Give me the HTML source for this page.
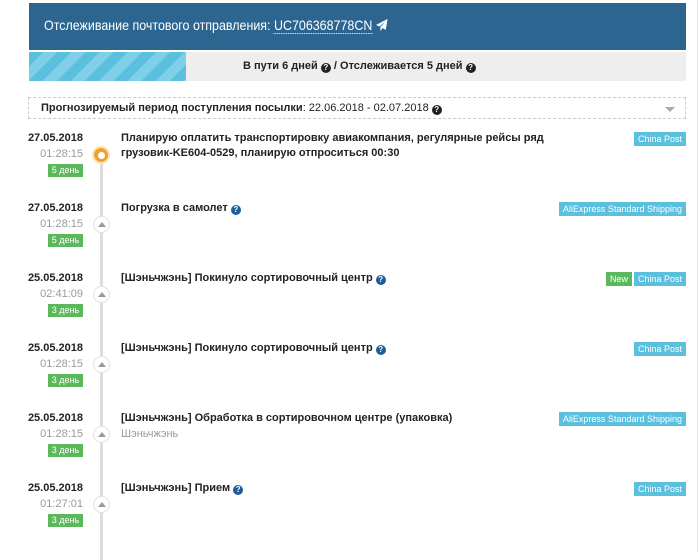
<!DOCTYPE html>
<html><head><meta charset="utf-8"><style>
*{margin:0;padding:0;box-sizing:border-box}
body{width:700px;height:551px;background:#fff;font-family:"Liberation Sans",sans-serif;position:relative;overflow:hidden;color:#222}
.abs{position:absolute}
.hdr{left:29px;top:3px;width:657px;height:47px;background:#2c6690;color:#fff;font-size:14px;padding:14px 0 0 15px}
.hdr .t{display:inline-block;transform:scaleX(0.89);transform-origin:0 0;white-space:nowrap}
.hdr u{text-decoration:none;border-bottom:1px dotted #fff}
.prog{left:29px;top:52px;width:657px;height:29px;background:#eee;font-size:11px;font-weight:bold;color:#222}
.stripe{left:0;top:0;width:157px;height:29px;background:repeating-linear-gradient(135deg,#5bc0de 0 10px,#7fcfe8 10px 20px)}
.q{display:inline-block;width:10px;height:10px;border-radius:50%;background:#222;color:#fff;font-size:8px;line-height:10px;text-align:center;font-weight:bold;vertical-align:-1px}
.qb{background:#1d5d97}
.fc{left:28px;top:97px;width:658px;height:22px;border:1px dashed #ccc;font-size:11px;padding:4px 0 0 12px}
.vl{left:697px;top:0;width:0;height:551px;border-left:1px dotted #ccc}
.line{left:100px;top:160px;width:3px;height:400px;background:#ddd}
.date{left:0;width:83px;text-align:right;font-size:11px;font-weight:bold}
.time{left:0;width:83px;text-align:right;font-size:11px;color:#999}
.days{left:48px;width:35px;height:13px;background:#5cb85c;color:#fff;font-size:9px;text-align:center;line-height:13px}
.dot{left:93px;width:17px;height:17px;border-radius:50%;background:#fff;border:1px solid #e2e2e2}
.dot:after{content:"";position:absolute;left:4px;top:5px;border-left:4px solid transparent;border-right:4px solid transparent;border-bottom:5px solid #999}
.ev{left:121px;font-size:11px;font-weight:bold;line-height:15px}
.lbl{height:14px;background:#5bc0de;color:#fff;font-size:9px;line-height:14px;padding:0 4px}
.new{background:#5cb85c}
.sub{left:121px;font-size:11px;color:#999}
</style></head><body>
<div class="abs vl"></div>
<div class="abs hdr"><span class="t">Отслеживание почтового отправления: <u>UC706368778CN</u> <svg width="13" height="12" viewBox="0 0 13 12" style="vertical-align:-1px"><path d="M13 0L0 6l4 1.5L11 2 5 8v4l2.5-3L11 11z" fill="#fff"/></svg></span></div>
<div class="abs prog"><div class="abs stripe"></div><div class="abs" style="left:214px;top:8px">В пути 6 дней <span class="q">?</span> / Отслеживается 5 дней <span class="q">?</span></div></div>
<div class="abs fc"><b>Прогнозируемый период поступления посылки</b>: 22.06.2018 - 02.07.2018 <span class="q">?</span><span class="abs" style="right:10px;top:9px;border-left:5px solid transparent;border-right:5px solid transparent;border-top:5px solid #aaa"></span></div>
<div class="abs line"></div>

<div class="abs date" style="top:132px">27.05.2018</div>
<div class="abs time" style="top:148px">01:28:15</div>
<div class="abs days" style="top:164px">5 день</div>
<div class="abs" style="left:92px;top:146px;width:18px;height:18px;border-radius:50%;background:#f0a030;border:2px solid #fde3b8"><div style="position:absolute;left:4px;top:4px;width:7px;height:7px;border-radius:50%;background:#fff"></div></div>
<div class="abs ev" style="top:131px">Планирую оплатить транспортировку авиакомпания, регулярные рейсы ряд<br>грузовик-KE604-0529, планирую отпроситься 00:30</div>
<div class="abs lbl" style="right:14px;top:132px">China Post</div>

<div class="abs date" style="top:202px">27.05.2018</div>
<div class="abs time" style="top:218px">01:28:15</div>
<div class="abs days" style="top:234px">5 день</div>
<div class="abs dot" style="top:216px"></div>
<div class="abs ev" style="top:201px">Погрузка в самолет <span class="q qb">?</span></div>
<div class="abs lbl" style="right:14px;top:202px">AliExpress Standard Shipping</div>

<div class="abs date" style="top:272px">25.05.2018</div>
<div class="abs time" style="top:288px">02:41:09</div>
<div class="abs days" style="top:304px">3 день</div>
<div class="abs dot" style="top:286px"></div>
<div class="abs ev" style="top:271px">[Шэньчжэнь] Покинуло сортировочный центр <span class="q qb">?</span></div>
<div class="abs lbl new" style="right:68px;top:272px">New</div>
<div class="abs lbl" style="right:14px;top:272px">China Post</div>

<div class="abs date" style="top:342px">25.05.2018</div>
<div class="abs time" style="top:358px">01:28:15</div>
<div class="abs days" style="top:374px">3 день</div>
<div class="abs dot" style="top:356px"></div>
<div class="abs ev" style="top:341px">[Шэньчжэнь] Покинуло сортировочный центр <span class="q qb">?</span></div>
<div class="abs lbl" style="right:14px;top:342px">China Post</div>

<div class="abs date" style="top:412px">25.05.2018</div>
<div class="abs time" style="top:428px">01:28:15</div>
<div class="abs days" style="top:444px">3 день</div>
<div class="abs dot" style="top:426px"></div>
<div class="abs ev" style="top:411px">[Шэньчжэнь] Обработка в сортировочном центре (упаковка)</div>
<div class="abs sub" style="top:428px">Шэньчжэнь</div>
<div class="abs lbl" style="right:14px;top:412px">AliExpress Standard Shipping</div>

<div class="abs date" style="top:482px">25.05.2018</div>
<div class="abs time" style="top:498px">01:27:01</div>
<div class="abs days" style="top:514px">3 день</div>
<div class="abs dot" style="top:496px"></div>
<div class="abs ev" style="top:481px">[Шэньчжэнь] Прием <span class="q qb">?</span></div>
<div class="abs lbl" style="right:14px;top:482px">China Post</div>
</body></html>
